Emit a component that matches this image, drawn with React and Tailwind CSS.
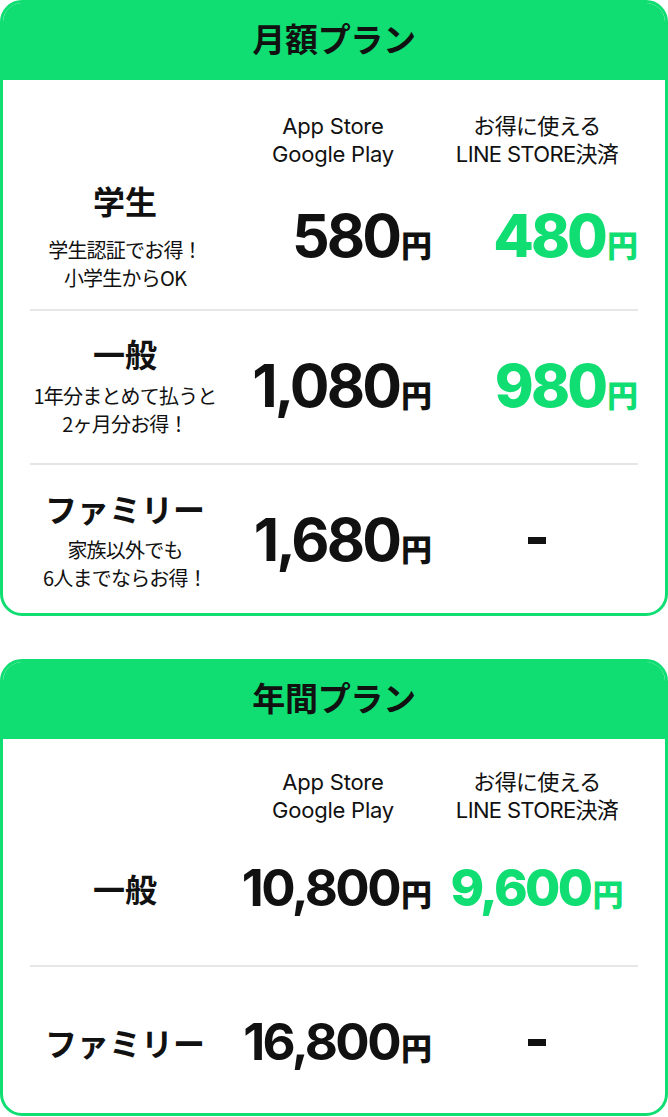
import React from 'react'

const GREEN = 'text-[#10dd72]'
const latin = { fontFamily: 'Inter, "Noto Sans CJK JP", sans-serif' }
const jp = { fontFamily: '"Noto Sans CJK JP", sans-serif' }

// 価格表示 (small = 年間プランの少し小さい数字)
function Price({ value, green, small, align = 'end' }) {
  const justify = align === 'center' ? 'justify-center' : 'justify-end'
  const size = small ? 'text-[51px]' : 'text-[59px]'
  return (
    <div className={`flex items-baseline ${justify} ${green ? GREEN : 'text-[#111]'}`}>
      <span
        className={`${size} leading-[60px] tracking-[-0.05em] ${green ? 'font-extrabold' : 'font-bold'}`}
        style={latin}
      >
        {value}
      </span>
      <span className="text-[31px] leading-none font-black ml-[2px]" style={jp}>円</span>
    </div>
  )
}

function Dash() {
  return (
    <div className="flex justify-center">
      <span className="block w-[18px] h-[7px] bg-[#111]" />
    </div>
  )
}

function Label({ title, lines, gap = 'mt-2' }) {
  return (
    <div className="flex flex-col items-center pr-[10px] text-[#111]" style={jp}>
      <div className="text-[32px] leading-[40px] font-bold">{title}</div>
      {lines && (
        <div className={`${gap} text-[20px] leading-[28px] text-center tracking-[-0.04em]`}>
          {lines.map((l) => (
            <div key={l}>{l}</div>
          ))}
        </div>
      )}
    </div>
  )
}

function Row({ children, className = '' }) {
  return (
    <div className={`grid grid-cols-[200px_206px_202px] items-center ${className}`}>{children}</div>
  )
}

function Divider() {
  return <div className="h-[2px] bg-[#e6e6e6]" />
}

function Header({ className = 'pt-[30px]' }) {
  return (
    <Row className={className}>
      <div />
      <div className="text-center text-[22px] leading-[28px] text-[#111] tracking-[-0.01em]" style={latin}>
        <div>App Store</div>
        <div>Google Play</div>
      </div>
      <div className="text-center text-[22px] leading-[28px] text-[#111] tracking-[-0.03em]" style={latin}>
        <div>お得に使える</div>
        <div>LINE STORE決済</div>
      </div>
    </Row>
  )
}

function Card({ title, children }) {
  return (
    <div className="border-[3px] border-[#10dd72] rounded-[22px] overflow-hidden bg-white">
      <div className="h-[77px] pb-[6px] bg-[#10dd72] flex items-center justify-center">
        <span className="text-[33px] font-bold text-[#111] tracking-[-0.01em]" style={jp}>{title}</span>
      </div>
      <div className="px-[27px]">{children}</div>
    </div>
  )
}

export default function App() {
  return (
    <div className="w-[668px] bg-white flex flex-col gap-[43px] pb-[3px]">
      <Card title="月額プラン">
        <Header className="pt-[32px]" />
        <Row className="pt-[12px] pb-[17px]">
          <Label title="学生" lines={['学生認証でお得！', '小学生からOK']} gap="mt-[16px]" />
          <div className="pr-[4px]"><Price value="580" /></div>
          <Price value="480" green />
        </Row>
        <Divider />
        <Row className="pt-[22px] pb-[25px]">
          <Label title="一般" lines={['1年分まとめて払うと', '2ヶ月分お得！']} gap="mt-[9px]" />
          <div className="pr-[4px]"><Price value="1,080" /></div>
          <Price value="980" green />
        </Row>
        <Divider />
        <Row className="pt-[23px] pb-[21px]">
          <Label title="ファミリー" lines={['家族以外でも', '6人までならお得！']} gap="mt-2" />
          <div className="pr-[4px]"><Price value="1,680" /></div>
          <Dash />
        </Row>
      </Card>

      <Card title="年間プラン">
        <Header className="pt-[29px]" />
        <Row className="pt-[34px] pb-[47px]">
          <Label title="一般" />
          <div className="pr-[4px]"><Price value="10,800" small /></div>
          <Price value="9,600" green small align="center" />
        </Row>
        <Divider />
        <Row className="pt-[45px] pb-[41px]">
          <Label title="ファミリー" />
          <div className="pr-[4px]"><Price value="16,800" small /></div>
          <Dash />
        </Row>
      </Card>
    </div>
  )
}
